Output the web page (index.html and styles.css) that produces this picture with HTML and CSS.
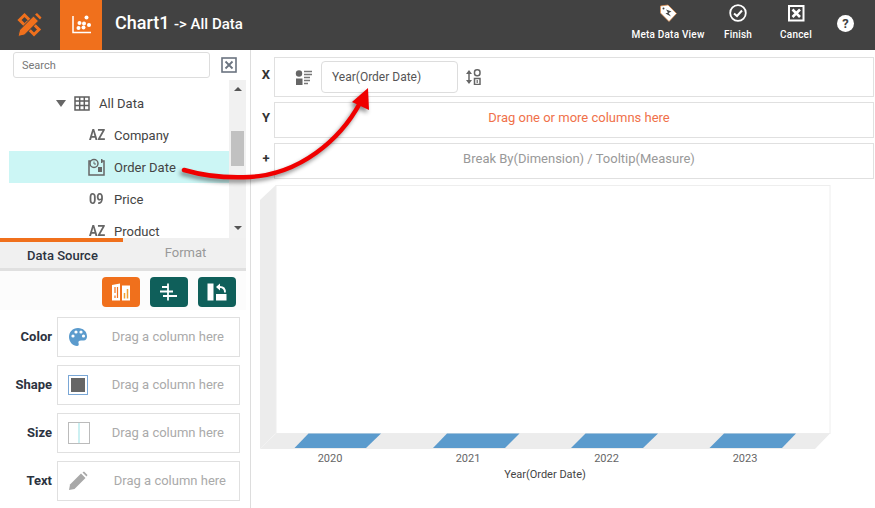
FILE: index.html
```html
<!DOCTYPE html>
<html lang="en">
<head>
    <meta charset="UTF-8">
    <meta name="viewport" content="width=device-width, initial-scale=1.0">
    <title>Chart1</title>
    <link rel="stylesheet" href="styles.css">
</head>
<body>

    <header class="topbar">
        <div class="logo">
            <svg width="26" height="26" viewBox="0 0 26 26">
                <g fill="none" stroke="#f0701c" stroke-width="3">
                    <path d="M3.500 8 L8.500 3 L23 17.500 L18 22.500 Z"/>
                </g>
                <path d="M12 9 L9 12 M16 13 L13 16" stroke="#f0701c" stroke-width="1.800"/>
                <path d="M2 24.500 L3.500 18 L17.500 4 L22.500 9 L8.500 23 Z" fill="#f0701c" stroke="#424242" stroke-width="1"/>
                <path d="M19 2.500 L21 1 L25.500 5.500 L24 7.500 Z" fill="#f0701c"/>
            </svg>
        </div>
        <div class="chart-tab">
            <svg width="20" height="20" viewBox="0 0 20 20">
                <path d="M1 1 V17.500 H19" fill="none" stroke="#fff" stroke-width="1.500"/>
                <g fill="#fff">
                    <circle cx="14.500" cy="2.500" r="2"/>
                    <circle cx="7.500" cy="8" r="2"/>
                    <circle cx="12" cy="8.500" r="2"/>
                    <circle cx="17" cy="10" r="2"/>
                    <circle cx="6.500" cy="13" r="2"/>
                    <circle cx="11.500" cy="12.500" r="2"/>
                </g>
            </svg>
        </div>
        <div class="title">Chart1 <span class="title-sub">-&gt; All Data</span></div>
        <div class="actions">
            <div class="action action-meta">
                <svg width="20" height="20" viewBox="0 0 20 20">
                    <path d="M2.500 3 L10 2 L18.500 10.500 L11 18.500 L2.500 10 Z" fill="#fff" stroke="#e8914a" stroke-width="0.700"/>
                    <path d="M8 6.500 L13.500 8.500 L10.500 10 L13 13.500 L7.500 10.500 L10 9.500 Z" fill="#424242"/>
                    <circle cx="5.500" cy="5.500" r="1" fill="#424242"/>
                </svg>
                <span>Meta Data View</span>
            </div>
            <div class="action action-finish">
                <svg width="20" height="20" viewBox="0 0 20 20">
                    <circle cx="10" cy="10" r="7.800" fill="none" stroke="#fff" stroke-width="1.800"/>
                    <path d="M6 10.500 L9 13 L14 7.500" fill="none" stroke="#fff" stroke-width="2"/>
                </svg>
                <span>Finish</span>
            </div>
            <div class="action action-cancel">
                <svg width="20" height="20" viewBox="0 0 20 20">
                    <rect x="3" y="3" width="14.500" height="14.500" fill="none" stroke="#fff" stroke-width="2"/>
                    <path d="M6.500 6.500 L14 14 M14 6.500 L6.500 14" stroke="#fff" stroke-width="2.600"/>
                </svg>
                <span>Cancel</span>
            </div>
            <div class="help">?</div>
        </div>
    </header>

    <div class="content">
        <aside class="sidebar">
            <div class="search-row">
                <input class="search" type="text" placeholder="Search">
                <svg class="search-close" width="16" height="16" viewBox="0 0 16 16">
                    <rect x="1" y="1" width="14" height="14" fill="none" stroke="#6b7480" stroke-width="1.600"/>
                    <path d="M4.500 4.500 L11.500 11.500 M11.500 4.500 L4.500 11.500" stroke="#6b7480" stroke-width="1.800"/>
                </svg>
            </div>

            <div class="tree-wrap">
                <div class="tree">
                    <div class="tree-row tree-root">
                        <span class="caret"></span>
                        <svg class="table-icon" width="16" height="15" viewBox="0 0 16 15">
                            <path d="M1 1 H15 V14 H1 Z M1 5 H15 M1 9.500 H15 M5.700 1 V14 M10.300 1 V14" fill="none" stroke="#5f5f5f" stroke-width="1.500"/>
                        </svg>
                        <span>All Data</span>
                    </div>
                    <div class="tree-row">
                        <span class="type">AZ</span><span>Company</span>
                    </div>
                    <div class="tree-row selected">
                        <svg class="type-svg" width="17" height="18" viewBox="0 0 17 18">
                            <path d="M5 3 H1 V17 H16 V3 H14" fill="none" stroke="#666" stroke-width="1.500"/>
                            <circle cx="6" cy="5.500" r="4" fill="#ccf6f5" stroke="#666" stroke-width="1.500"/>
                            <path d="M6 3.500 V6 H8" fill="none" stroke="#666"/>
                            <rect x="10" y="9" width="4" height="5" fill="#666"/>
                            <rect x="13" y="1" width="1.500" height="4" fill="#666"/>
                        </svg>
                        <span>Order Date</span>
                    </div>
                    <div class="tree-row">
                        <span class="type">09</span><span>Price</span>
                    </div>
                    <div class="tree-row">
                        <span class="type">AZ</span><span>Product</span>
                    </div>
                </div>
                <div class="scrollbar">
                    <span class="arrow-up"></span>
                    <span class="thumb"></span>
                    <span class="arrow-down"></span>
                </div>
            </div>

            <div class="tabs">
                <div class="tab tab-active">Data Source</div>
                <div class="tab">Format</div>
            </div>

            <div class="toolbar">
                <div class="tool tool-orange">
                    <svg width="20" height="18" viewBox="0 0 20 18">
                        <path d="M1 2 L9 0.500 V17.500 H1 Z" fill="#fff"/>
                        <path d="M4 4 V10 M4 12.500 V15 M6.500 4 V15" stroke="#f0701c" stroke-width="1.200"/>
                        <path d="M11 2.500 H19 V17.500 H11 Z" fill="#fff"/>
                        <path d="M13.500 10 V15.500 M16.500 6 V15.500" stroke="#f0a030" stroke-width="1.500"/>
                    </svg>
                </div>
                <div class="tool">
                    <svg width="20" height="18" viewBox="0 0 20 18">
                        <path d="M9 0.500 V17.500" stroke="#fff" stroke-width="1.800"/>
                        <path d="M3 4 H9 M1 8.500 H9 M4 13 H9 M9 8.500 H14 M9 13 H18" stroke="#fff" stroke-width="2.200"/>
                    </svg>
                </div>
                <div class="tool">
                    <svg width="20" height="18" viewBox="0 0 20 18">
                        <rect x="0.500" y="0.500" width="6" height="17" fill="#fff"/>
                        <rect x="9" y="11" width="10.500" height="6.500" fill="#fff"/>
                        <path d="M11 4 H13 C16 4 18 6 18 9.500" fill="none" stroke="#fff" stroke-width="1.800"/>
                        <path d="M13 0.500 L9 4 L13 7.500 Z" fill="#fff"/>
                    </svg>
                </div>
            </div>

            <div class="slots">
                <div class="slot">
                    <span class="slot-label">Color</span>
                    <div class="slot-box">
                        <svg width="20" height="20" viewBox="0 0 20 20">
                            <path d="M10 1 C4.500 1 1 5 1 10 C1 15 5 19 9 19 C11 19 11 17 10.500 16 C10 14.500 11 13.500 13 13.500 H15.500 C18 13.500 19 11.500 19 9.500 C19 4.500 15 1 10 1 Z" fill="#5b9bcd"/>
                            <circle cx="5" cy="9" r="1.600" fill="#fff"/>
                            <circle cx="8" cy="5" r="1.600" fill="#fff"/>
                            <circle cx="13" cy="5" r="1.600" fill="#fff"/>
                            <circle cx="15.500" cy="9" r="1.600" fill="#fff"/>
                        </svg>
                        <span class="slot-text">Drag a column here</span>
                    </div>
                </div>
                <div class="slot">
                    <span class="slot-label">Shape</span>
                    <div class="slot-box">
                        <svg width="20" height="20" viewBox="0 0 20 20">
                            <rect x="0.500" y="0.500" width="19" height="19" fill="#fff" stroke="#7aa7d6"/>
                            <rect x="3" y="3" width="14" height="14" fill="#666"/>
                        </svg>
                        <span class="slot-text">Drag a column here</span>
                    </div>
                </div>
                <div class="slot">
                    <span class="slot-label">Size</span>
                    <div class="slot-box">
                        <svg width="22" height="22" viewBox="0 0 22 22">
                            <rect x="0.500" y="0.500" width="21" height="21" fill="#fff" stroke="#bbb"/>
                            <rect x="10" y="1" width="2" height="20" fill="#ccf0f2"/>
                        </svg>
                        <span class="slot-text">Drag a column here</span>
                    </div>
                </div>
                <div class="slot">
                    <span class="slot-label">Text</span>
                    <div class="slot-box">
                        <svg width="20" height="20" viewBox="0 0 20 20">
                            <path d="M1 19 L2 13.500 L13 2.500 L17.500 7 L6.500 18 Z" fill="#a8a8a8"/>
                            <path d="M14.500 1.500 L16 0.500 L19.500 4 L18.500 5.500 Z" fill="#a8a8a8"/>
                        </svg>
                        <span class="slot-text slot-text-far">Drag a column here</span>
                    </div>
                </div>
            </div>
        </aside>

        <main class="main">
            <div class="shelf">
                <span class="shelf-label">X</span>
                <div class="shelf-box shelf-x">
                    <svg width="18" height="15" viewBox="0 0 18 15">
                        <circle cx="4" cy="3.500" r="3.200" fill="#666"/>
                        <rect x="1" y="8.500" width="6.500" height="6.500" fill="#666"/>
                        <path d="M9 1.500 H17 M9 4.500 H17 M9 7.500 H15 M9 10.500 H15 M9 13.500 H13" stroke="#777" stroke-width="1.400"/>
                    </svg>
                    <div class="chip">Year(Order Date)</div>
                    <svg width="16" height="16" viewBox="0 0 16 16">
                        <path d="M4 2 V14" stroke="#666" stroke-width="1.500"/>
                        <path d="M1 5 L4 1 L7 5 Z M1 11 L4 15 L7 11 Z" fill="#666"/>
                        <rect x="9.500" y="0.800" width="5.500" height="6" rx="2.500" fill="none" stroke="#666" stroke-width="1.500"/>
                        <rect x="9.500" y="9.500" width="5.500" height="6" fill="none" stroke="#666" stroke-width="1.500"/>
                        <path d="M12.200 11 V14" stroke="#666" stroke-width="1.200"/>
                    </svg>
                </div>
            </div>
            <div class="shelf">
                <span class="shelf-label">Y</span>
                <div class="shelf-box shelf-drop shelf-hint">Drag one or more columns here</div>
            </div>
            <div class="shelf">
                <span class="shelf-label">+</span>
                <div class="shelf-box shelf-drop">Break By(Dimension) / Tooltip(Measure)</div>
            </div>

            <svg class="chart" width="624" height="328" viewBox="251 180 624 328">
                <path d="M260 200 L276 185 V433 L260 449 Z" fill="#ececec"/>
                <rect x="276" y="185.500" width="554" height="248" fill="#fff" stroke="#eeeeee"/>
                <path d="M276 433.500 H830 L815 449 H260 Z" fill="#ececec"/>
                <g fill="#5b9bcd">
                    <path d="M308.500 433.500 H381 L366 448 H294.500 Z"/>
                    <path d="M447 433.500 H519.500 L505 448 H433 Z"/>
                    <path d="M585.500 433.500 H658 L643 448 H571 Z"/>
                    <path d="M724 433.500 H796 L782 448 H709.500 Z"/>
                </g>
                <g class="tick" text-anchor="middle">
                    <text x="330" y="462">2020</text>
                    <text x="468" y="462">2021</text>
                    <text x="606.500" y="462">2022</text>
                    <text x="745" y="462">2023</text>
                </g>
                <text class="axis-title" x="545" y="478" text-anchor="middle">Year(Order Date)</text>
            </svg>
        </main>
    </div>

    <svg class="drag-arrow" width="875" height="508" viewBox="0 0 875 508">
        <path d="M184 170 Q215 179 250 177 C300 174 340 140 360 103" fill="none" stroke="#f00000" stroke-width="4.500" stroke-linecap="round"/>
        <path d="M368 88 L352 102 L369 110 Z" fill="#f00000"/>
    </svg>

</body>
</html>
```

FILE: styles.css
```css
* {
    box-sizing: border-box;
}

html, body {
    height: 100%;
}

body {
    margin: 0;
    font-family: Roboto, "Liberation Sans", sans-serif;
    font-size: 13px;
    color: #444;
    background-color: #fff;
    overflow: hidden;
    position: relative;
}

svg {
    display: block;
    flex-shrink: 0;
}

/* top bar */
.topbar {
    display: flex;
    align-items: stretch;
    height: 50px;
    background-color: #424242;
    color: #fff;
}

.logo {
    width: 60px;
    display: flex;
    align-items: center;
    justify-content: center;
    padding-right: 2px;
}

.chart-tab {
    width: 42px;
    background-color: #f0701c;
    display: flex;
    align-items: center;
    justify-content: center;
    padding-left: 1px;
}

.title {
    margin-left: 13px;
    font-size: 18px;
    font-weight: 500;
    line-height: 46px;
    white-space: nowrap;
}

.title-sub {
    font-size: 15px;
}

.actions {
    margin-left: auto;
    display: flex;
    align-items: flex-start;
}

.action {
    display: flex;
    flex-direction: column;
    align-items: center;
    padding-top: 3px;
    font-size: 10px;
    font-weight: 500;
    letter-spacing: 0.2px;
    line-height: 12px;
}

.action span {
    margin-top: 6px;
}

.action-meta {
    width: 80px;
}

.action-finish {
    width: 60px;
}

.action-cancel {
    width: 56px;
}

.help {
    width: 17px;
    height: 17px;
    margin: 15px 21px 0 13px;
    border-radius: 50%;
    background-color: #fff;
    color: #424242;
    font-size: 13px;
    font-weight: 700;
    line-height: 17px;
    text-align: center;
}

/* page below the bar */
.content {
    display: flex;
    height: 458px;
}

.sidebar {
    width: 251px;
    padding-right: 4px;
    border-right: 1px solid #dddddd;
    display: flex;
    flex-direction: column;
}

.search-row {
    display: flex;
    align-items: center;
    height: 30px;
    padding: 2px 0 2px 13px;
}

.search {
    width: 197px;
    height: 26px;
    padding: 0 8px;
    border: 1px solid #ddd;
    border-radius: 3px;
    font-family: inherit;
    font-size: 11px;
    outline: none;
}

.search::placeholder {
    color: #777;
    opacity: 1;
}

.search-close {
    margin-left: 11px;
}

.tree-wrap {
    display: flex;
    height: 158px;
    overflow: hidden;
}

.tree {
    width: 229px;
    padding: 7px 0 0 9px;
    overflow: hidden;
}

.tree-row {
    display: flex;
    align-items: center;
    height: 32px;
    padding-left: 79px;
    color: #444;
    white-space: nowrap;
}

.tree-root {
    padding-left: 47px;
    gap: 8px;
}

.table-icon {
    margin-right: 1px;
}

.selected {
    background-color: #ccf6f5;
}

.type {
    display: inline-block;
    width: 25px;
    margin-left: 1px;
    font-size: 15px;
    font-weight: 700;
    color: #666;
    transform: scaleX(0.85);
    transform-origin: left center;
    flex-shrink: 0;
}

.type-svg {
    margin-right: 9px;
}

.caret {
    width: 0;
    height: 0;
    border-left: 5px solid transparent;
    border-right: 5px solid transparent;
    border-top: 7px solid #666;
}

.scrollbar {
    width: 17px;
    background-color: #f1f1f1;
    display: flex;
    flex-direction: column;
    align-items: center;
}

.arrow-up {
    margin-top: 7px;
    border-left: 4px solid transparent;
    border-right: 4px solid transparent;
    border-bottom: 4px solid #555;
}

.thumb {
    width: 13px;
    height: 35px;
    margin-top: 40px;
    background-color: #c1c1c1;
}

.arrow-down {
    margin-top: 60px;
    border-left: 4px solid transparent;
    border-right: 4px solid transparent;
    border-top: 4px solid #555;
}

/* tabs */
.tabs {
    display: flex;
    height: 33px;
    background-color: #f0f0f0;
    border-bottom: 3px solid #e0e0e0;
    border-top: 4px solid transparent;
    position: relative;
}

.tab {
    width: 123px;
    padding-left: 2px;
    text-align: center;
    color: #999;
    line-height: 22px;
}

.tab-active {
    color: #2c3340;
    font-weight: 500;
    line-height: 27px;
    position: relative;
}

.tab-active::before {
    content: "";
    position: absolute;
    left: 0;
    right: 0;
    top: -4px;
    height: 4px;
    background-color: #f0701c;
}

.toolbar {
    display: flex;
    justify-content: flex-end;
    gap: 10px;
    height: 39px;
    padding: 6px 10px 0 0;
    background-color: #fcfcfc;
}

.tool {
    width: 38px;
    height: 30px;
    border-radius: 4px;
    background-color: #0f5f5a;
    display: flex;
    align-items: center;
    justify-content: center;
}

.tool-orange {
    background-color: #f0701c;
}

.slots {
    display: flex;
    flex-direction: column;
    gap: 8px;
    padding-top: 7px;
}

.slot {
    display: flex;
    align-items: center;
}

.slot-label {
    width: 52px;
    margin: 0 5px 2px 0;
    text-align: right;
    font-weight: 700;
    color: #2c3340;
}

.slot-box {
    display: flex;
    align-items: center;
    width: 183px;
    height: 40px;
    padding: 0 15px 0 10px;
    border: 1px solid #e0e0e0;
}

.slot-text {
    margin: 0 0 2px auto;
    color: #aaa;
    white-space: nowrap;
}

.slot-text-far {
    margin-right: -2px;
}

/* right side */
.main {
    flex: 1;
    display: flex;
    flex-direction: column;
    gap: 5px;
    padding-top: 7px;
    min-width: 0;
}

.shelf {
    display: flex;
    align-items: center;
    padding-right: 1px;
}

.shelf-label {
    width: 23px;
    padding: 0 0 6px 7px;
    text-align: center;
    font-weight: 700;
    color: #333;
}

.shelf-box {
    flex: 1;
    height: 36px;
    border: 1px solid #e0e0e0;
}

.shelf-x {
    height: 40px;
    display: flex;
    align-items: center;
    padding-left: 20px;
}

.chip {
    width: 137px;
    height: 32px;
    margin: 0 7px 0 8px;
    padding-left: 10px;
    border: 1px solid #ddd;
    border-radius: 4px;
    font-size: 12px;
    line-height: 30px;
    color: #555;
    background-color: #fff;
}

.shelf-drop {
    padding-left: 10px;
    line-height: 29px;
    text-align: center;
    color: #999;
}

.shelf-hint {
    color: #f0714a;
}

.chart {
    margin-top: -4px;
}

.tick {
    font-size: 11px;
    fill: #666;
}

.axis-title {
    font-size: 11px;
    fill: #444;
}

/* red drag hint on top of everything */
.drag-arrow {
    position: absolute;
    left: 0;
    top: 0;
    pointer-events: none;
    filter: drop-shadow(-2px 3px 2px rgba(0, 0, 0, 0.45));
}
```
